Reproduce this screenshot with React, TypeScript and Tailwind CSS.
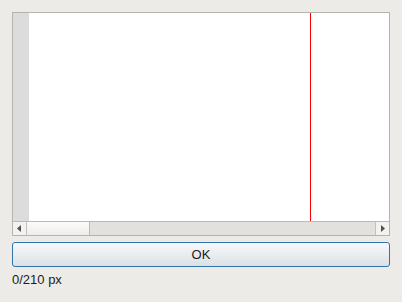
export default function App() {
  return (
    <div
      className="w-[402px] h-[302px] bg-[#edebe7] pt-3 px-3 text-[#1c1c1c]"
      style={{ fontFamily: '"Liberation Sans", Arial, sans-serif' }}
    >
      <div className="w-[378px] h-[224px] border border-[#b6b3ae] flex flex-col">
        {/* canvas */}
        <div className="flex-1 flex bg-white">
          <div className="w-4 bg-[#dcdcdc]" />
          <div className="w-[281px]" />
          <div className="w-px bg-[#ff0000]" />
        </div>
        {/* horizontal scrollbar */}
        <div className="h-[14px] border-t border-[#bdbab5] flex bg-[#e3e1dd]">
          <div className="w-[14px] border-r border-[#c4c1bc] bg-[#f3f2f0] flex items-center justify-center">
            <svg width="5" height="7" viewBox="0 0 5 7">
              <path d="M4 0 L0 3.5 L4 7 Z" fill="#505050" />
            </svg>
          </div>
          <div className="w-[63px] border-r border-[#bdbab5] bg-gradient-to-b from-[#fbfbfa] to-[#efedea]" />
          <div className="flex-1" />
          <div className="w-[14px] border-l border-[#c4c1bc] bg-[#f3f2f0] flex items-center justify-center">
            <svg width="5" height="7" viewBox="0 0 5 7">
              <path d="M1 0 L5 3.5 L1 7 Z" fill="#505050" />
            </svg>
          </div>
        </div>
      </div>
      <button className="mt-[6px] w-[378px] h-[25px] border border-[#2f75ab] rounded-[3px] bg-gradient-to-b from-[#f8f9fb] to-[#dbe1e6] text-[13px] leading-none flex items-center justify-center">
        OK
      </button>
      <div className="mt-[5px] text-[13px] leading-4">0/210 px</div>
    </div>
  );
}
